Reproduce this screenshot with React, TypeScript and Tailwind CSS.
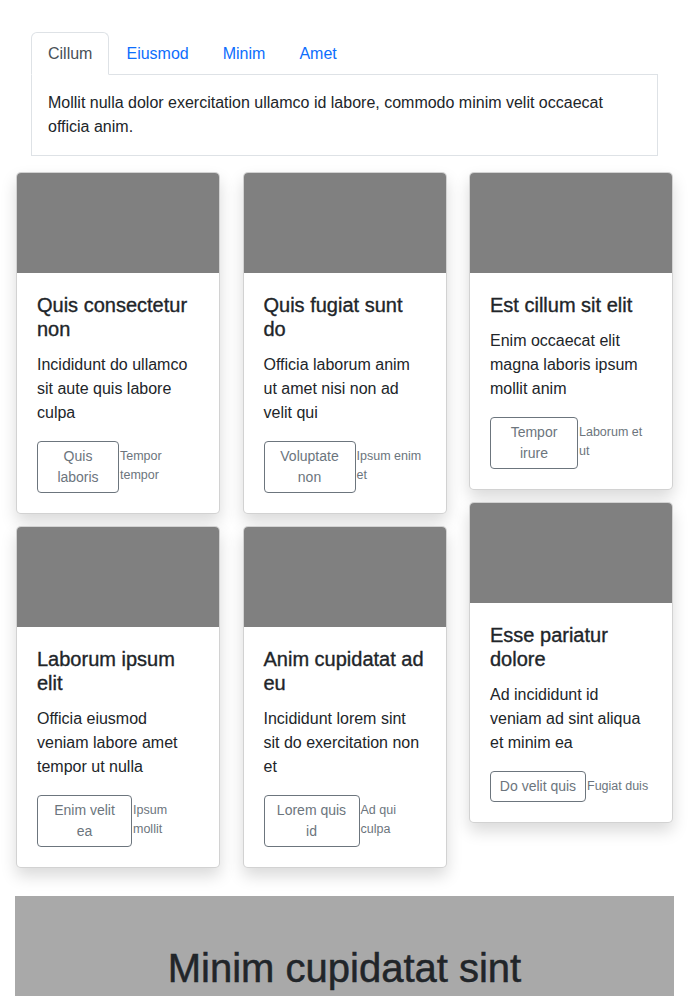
import React from "react";

type Card = { title: string; text: string; btn: string; note: string; bw: string };

const cols: Card[][] = [
  [
    { title: "Quis consectetur non", text: "Incididunt do ullamco sit aute quis labore culpa", btn: "Quis laboris", note: "Tempor tempor", bw: "w-[82px]" },
    { title: "Laborum ipsum elit", text: "Officia eiusmod veniam labore amet tempor ut nulla", btn: "Enim velit ea", note: "Ipsum mollit", bw: "w-[95px]" },
  ],
  [
    { title: "Quis fugiat sunt do", text: "Officia laborum anim ut amet nisi non ad velit qui", btn: "Voluptate non", note: "Ipsum enim et", bw: "w-[92px]" },
    { title: "Anim cupidatat ad eu", text: "Incididunt lorem sint sit do exercitation non et", btn: "Lorem quis id", note: "Ad qui culpa", bw: "w-[96px]" },
  ],
  [
    { title: "Est cillum sit elit", text: "Enim occaecat elit magna laboris ipsum mollit anim", btn: "Tempor irure", note: "Laborum et ut", bw: "w-[88px]" },
    { title: "Esse pariatur dolore", text: "Ad incididunt id veniam ad sint aliqua et minim ea", btn: "Do velit quis", note: "Fugiat duis", bw: "w-[96px]" },
  ],
];

function CardView({ c }: { c: Card }) {
  return (
    <div className="bg-white border border-[rgba(0,0,0,0.175)] rounded-[5px] overflow-hidden shadow-[0_8px_16px_rgba(0,0,0,0.15)]">
      <div className="h-[100px] bg-[#808080]" />
      <div className="p-5">
        <h5 className="text-[20px] leading-[24px] font-medium text-[#212529] mb-3 [-webkit-text-stroke:0.35px_#212529]">{c.title}</h5>
        <p className="text-[16px] leading-[24px] text-[#212529] mb-4">{c.text}</p>
        <div className="flex items-start">
          <button className={`${c.bw} shrink-0 border border-[#6c757d] rounded-[4px] px-[8px] py-[4px] text-[14px] leading-[21px] text-[#6c757d] bg-white text-center`}>
            {c.btn}
          </button>
          <small className="flex-1 min-w-0 text-[12.5px] leading-[19px] text-[#6c757d] pt-[6px] pl-px">{c.note}</small>
        </div>
      </div>
    </div>
  );
}

export default function App() {
  return (
    <div className="bg-white min-h-[996px] font-['Liberation_Sans',Arial,sans-serif] text-[#212529]">
      <div className="px-[31px] pt-[32px]">
        <div className="flex border-b border-[#dee2e6]">
          <div className="px-4 pt-[9px] pb-[7px] text-[16px] leading-[24px] text-[#495057] border border-[#dee2e6] border-b-white rounded-t-[6px] -mb-px bg-white">
            Cillum
          </div>
          <div className="px-4 pt-[9px] pb-[7px] text-[16px] leading-[24px] text-[#0d6efd] border border-transparent">Eiusmod</div>
          <div className="px-4 pt-[9px] pb-[7px] text-[16px] leading-[24px] text-[#0d6efd] border border-transparent">Minim</div>
          <div className="px-4 pt-[9px] pb-[7px] text-[16px] leading-[24px] text-[#0d6efd] border border-transparent">Amet</div>
        </div>
        <div className="border border-t-0 border-[#dee2e6] px-4 pt-4 pb-4 text-[16px] leading-[24px]">
          Mollit nulla dolor exercitation ullamco id labore, commodo minim velit occaecat officia anim.
        </div>
      </div>
      <div className="grid grid-cols-3 gap-x-[22.5px] px-[16px] mt-[16px] items-start">
        {cols.map((col, i) => (
          <div key={i} className="flex flex-col gap-[12px]">
            {col.map((c, j) => (
              <CardView key={j} c={c} />
            ))}
          </div>
        ))}
      </div>
      <div className="mx-[15px] mt-[28px] bg-[#a9a9a9] pt-[48px] pb-[48px] text-center">
        <h1 className="text-[40px] leading-[48px] font-medium text-[#212529] [-webkit-text-stroke:0.5px_#212529]">Minim cupidatat sint</h1>
      </div>
    </div>
  );
}
